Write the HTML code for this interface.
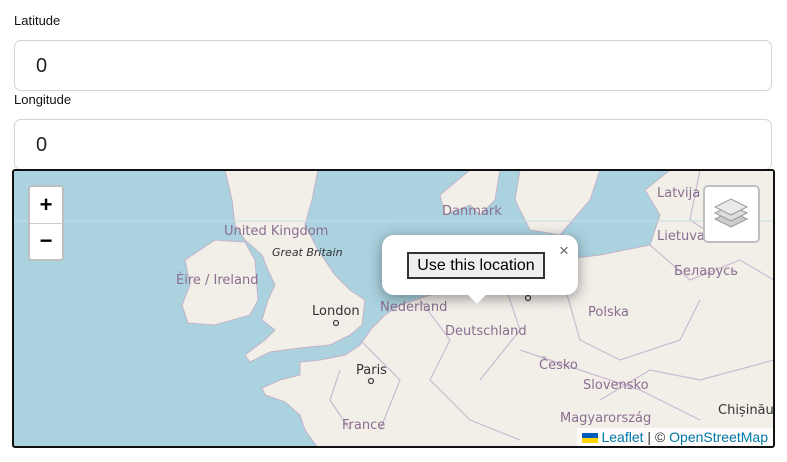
<!DOCTYPE html>
<html><head><meta charset="utf-8"><style>
body{margin:0;background:#fff;font-family:"Liberation Sans",Arial,sans-serif;width:787px;height:462px;overflow:hidden;position:relative}
.lbl{position:absolute;left:14px;font-size:13px;color:#111}
.inp{position:absolute;left:14px;width:758px;height:51px;border:1px solid #d4d4d8;border-radius:7px;box-sizing:border-box;font-size:20px;padding-left:21px;line-height:50px;color:#222}
#map{position:absolute;left:12px;top:169px;width:763px;height:279px;border:2px solid #111;box-sizing:border-box;border-radius:3px;overflow:hidden;background:#aad3df}
.t{position:absolute;font-family:"DejaVu Sans",sans-serif;font-size:13px;color:#8a6e8f;white-space:nowrap}
.c{color:#333;font-size:13px}
</style></head><body>
<div class="lbl" style="top:13px">Latitude</div>
<div class="inp" style="top:40px">0</div>
<div class="lbl" style="top:92px">Longitude</div>
<div class="inp" style="top:119px">0</div>
<div id="map">
<svg width="787" height="462" style="position:absolute;left:-14px;top:-171px" viewBox="0 0 787 462">
<g fill="#f2efe9" stroke="#c3b3c8" stroke-width="1">
<!-- GB -->
<path d="M225 170 L318 170 L312 200 L305 225 L318 250 L335 275 L350 290 L365 300 L362 325 L350 335 L330 345 L300 348 L270 352 L250 362 L245 355 L265 340 L275 330 L262 320 L268 300 L275 285 L268 270 L262 255 L245 240 L235 225 L232 200 Z"/>
<!-- Ireland -->
<path d="M215 240 L245 242 L255 260 L258 300 L250 315 L215 325 L188 323 L182 305 L190 285 L185 260 Z"/>
<!-- Continent -->
<path d="M372 328 L385 315 L400 305 L430 295 L470 292 L500 270 L540 262 L600 255 L650 245 L660 215 L645 190 L670 170 L774 170 L774 448 L318 448 L305 430 L300 415 L285 402 L265 395 L262 388 L280 380 L300 375 L300 362 L320 360 L345 355 L360 345 Z"/>
<!-- Denmark -->
<path d="M440 195 L470 170 L500 170 L495 200 L480 215 L470 205 L445 215 Z"/>
<!-- Sweden -->
<path d="M520 170 L600 170 L590 200 L560 235 L530 230 L515 200 Z"/>
</g>
<g fill="none" stroke="#cbbad0" stroke-width="1.2">
<path d="M420 300 L450 340 L430 380 L470 420 L520 440"/><path d="M500 270 L520 330 L480 380"/><path d="M560 270 L580 340 L620 360 L680 340 L700 300"/><path d="M520 350 L580 370 L640 390 L700 420"/><path d="M650 245 L690 280 L740 260 L774 280"/><path d="M700 170 L690 220 L720 240"/><path d="M360 340 L400 380 L380 430"/><path d="M600 400 L650 370 L700 380 L774 360"/><path d="M340 370 L330 400 L350 430"/>
</g>
<line x1="14" y1="221" x2="774" y2="221" stroke="#c4dde5" stroke-width="1"/>
<g fill="none" stroke="#444" stroke-width="1.3"><circle cx="336" cy="323" r="2.5"/><circle cx="371" cy="381" r="2.5"/><circle cx="528" cy="298" r="2.5"/></g>
</svg>
<div class="t" style="left:428px;top:33px">Danmark</div>
<div class="t" style="left:643px;top:15px">Latvija</div>
<div class="t" style="left:643px;top:58px">Lietuva</div>
<div class="t" style="left:660px;top:93px">Беларусь</div>
<div class="t" style="left:210px;top:53px">United Kingdom</div>
<div class="t c" style="left:258px;top:75px;font-style:italic;font-size:11px">Great Britain</div>
<div class="t" style="left:162px;top:102px">Éire / Ireland</div>
<div class="t c" style="left:298px;top:133px">London</div>
<div class="t" style="left:366px;top:129px">Nederland</div>
<div class="t" style="left:431px;top:153px">Deutschland</div>
<div class="t" style="left:574px;top:134px">Polska</div>
<div class="t" style="left:525px;top:187px">Česko</div>
<div class="t" style="left:569px;top:207px">Slovensko</div>
<div class="t" style="left:546px;top:240px">Magyarország</div>
<div class="t c" style="left:342px;top:192px">Paris</div>
<div class="t" style="left:328px;top:247px">France</div>
<div class="t c" style="left:704px;top:232px">Chișinău</div>
<div style="position:absolute;left:14px;top:14px;width:36px;height:76px;border:2px solid rgba(0,0,0,.25);border-radius:4px;background:#fff;box-sizing:border-box">
<div style="height:36px;border-bottom:1px solid #ccc;text-align:center;font:bold 22px/36px 'Liberation Sans';color:#000">+</div>
<div style="height:36px;text-align:center;font:bold 22px/34px 'Liberation Sans';color:#000">−</div></div>
<div style="position:absolute;left:689px;top:14px;width:57px;height:58px;border:2px solid rgba(0,0,0,.25);border-radius:5px;background:#fff;box-sizing:border-box">
<svg width="53" height="54"><path d="M26 40 L42 32 L26 24 L10 32Z" fill="#ccc" stroke="#999"/><path d="M26 34 L42 26 L26 18 L10 26Z" fill="#ddd" stroke="#999"/><path d="M26 28 L42 20 L26 12 L10 20Z" fill="#eaeaea" stroke="#999"/></svg></div>
<div style="position:absolute;left:368px;top:64px;width:196px;height:60px;background:#fff;border-radius:12px;box-shadow:0 3px 14px rgba(0,0,0,.4)"></div>
<div style="position:absolute;left:456px;top:116px;width:14px;height:14px;background:#fff;transform:rotate(45deg)"></div>
<div style="position:absolute;left:545px;top:70px;font-size:17px;color:#666">×</div>
<div style="position:absolute;left:393px;top:81px;width:138px;height:27px;border:2px solid #333;box-sizing:border-box;background:#efefef;font-size:16px;line-height:23px;text-align:center;color:#000">Use this location</div>
<div style="position:absolute;right:0;bottom:0;background:rgba(255,255,255,.8);font-size:14px;padding:0 5px;height:18px;line-height:18px;color:#333"><span style="display:inline-block;width:16px;height:10px;background:linear-gradient(#005bbb 50%,#ffd500 50%);vertical-align:-1px"></span> <span style="color:#0078a8">Leaflet</span> | © <span style="color:#0078a8">OpenStreetMap</span></div>
</div>
</body></html>
